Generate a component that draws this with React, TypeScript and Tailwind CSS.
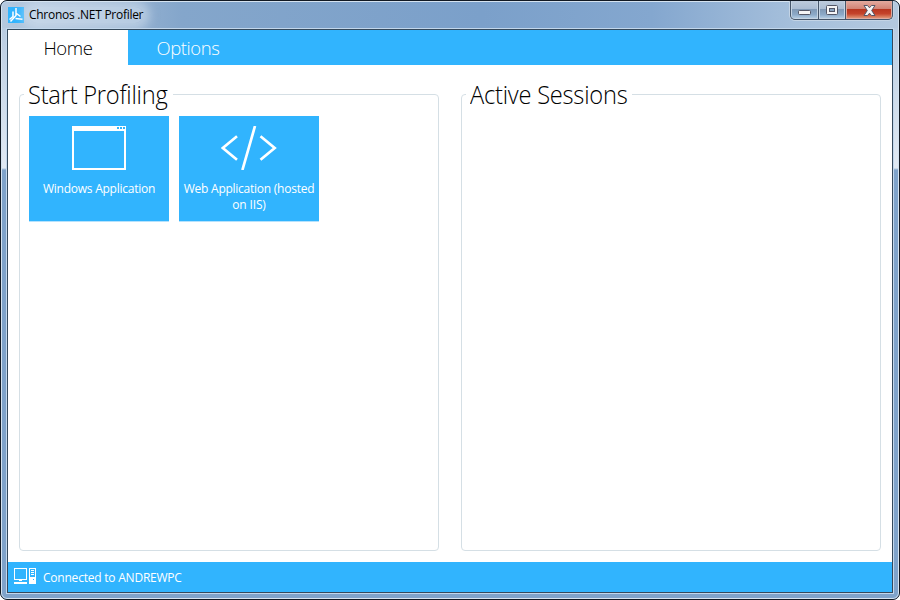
import React from "react";

function LogoIcon() {
  return (
    <svg width="16" height="16" viewBox="0 0 16 16" className="shrink-0">
      <rect width="16" height="16" fill="#31b4fe" />
      <path d="M8 1V8.5L2.5 14.5M8.5 6.5L12.5 9.5M5 4.5V9.5L1.5 12.5M7.5 11.5L14.5 12.3" fill="none" stroke="#fff" strokeWidth="1.5" />
    </svg>
  );
}

function WindowIcon() {
  return (
    <svg width="54" height="44" viewBox="0 0 54 44" shapeRendering="crispEdges">
      <path fillRule="evenodd" fill="#fff" d="M0 0H54V44H0ZM2 5V42H52V5Z" />
      <path fill="#31b4fe" d="M45 1h2v2h-2zM48 1h2v2h-2zM51 1h2v2h-2z" />
    </svg>
  );
}

function CodeIcon() {
  return (
    <svg width="56" height="44" viewBox="0 0 56 44">
      <path fill="none" stroke="#fff" strokeWidth="2.7" d="M16 10.2L1.8 22L16 33.8M39.5 10.2L53.7 22L39.5 33.8M34 0L21.4 44" />
    </svg>
  );
}

function ComputerIcon() {
  return (
    <svg width="22" height="16" viewBox="0 0 22 16" shapeRendering="crispEdges" className="shrink-0">
      <path fillRule="evenodd" fill="#fff" d="M0 0H13V12H0ZM1 1V11H12V1ZM5 12h3v1H5zM0 14h13v2H0zM15 0h7v16h-7zM16 1v8h5V1z" />
      <path fill="#fff" d="M17 2h3v1h-3zM17 4h3v1h-3zM17 6h3v1h-3z" />
      <path fill="#31b4fe" d="M19 11h1v1h-1z" />
    </svg>
  );
}

function WindowButtons() {
  const glass = "bg-[linear-gradient(180deg,#bdcbdc_0%,#abbdd3_45%,#7f98b5_48%,#8daac8_80%,#b0c9e0_100%)]";
  return (
    <div className="flex h-[19px] w-[103px] overflow-hidden rounded-b-[5px] border border-t-0 border-[#46566a] bg-[#46566a] shadow-[0_0_0_1px_#c4d4e5]">
      <div className={`flex w-[27px] items-center justify-center border border-t-0 border-[#c6d4e3] ${glass}`}>
        <svg width="13" height="5" viewBox="0 0 13 5" className="mt-[6px]">
          <rect x="0.5" y="0.5" width="12" height="4" rx="1" fill="#f5f5f6" stroke="#535666" />
        </svg>
      </div>
      <div className={`ml-px flex w-[26px] items-center justify-center border border-t-0 border-[#c6d4e3] ${glass}`}>
        <svg width="12" height="10" viewBox="0 0 12 10" className="mt-px">
          <rect x="0.5" y="0.5" width="11" height="9" rx="1" fill="#f5f5f6" stroke="#535666" />
          <rect x="3.5" y="3.5" width="5" height="3" fill="#8ba5c1" stroke="#535666" />
        </svg>
      </div>
      <div className="ml-px flex flex-1 items-center justify-center border border-t-0 border-[#dfaaa0] bg-[linear-gradient(180deg,#e3aa9f_0%,#d28476_45%,#b8351f_48%,#c5442b_75%,#df9272_100%)]">
        <svg width="13" height="11" viewBox="0 0 13 11" className="mt-px">
          <path d="M1 .5h3.5l2 2.3 2-2.3H12L8.7 5.5 12 10.5H8.5l-2-2.3-2 2.3H1l3.3-5z" fill="#f6f6f7" stroke="#535666" strokeLinejoin="round" />
        </svg>
      </div>
    </div>
  );
}

function Group({ title, width, children }: { title: string; width: string; children?: React.ReactNode }) {
  return (
    <fieldset className="h-[470px] w-[420px] min-w-0 rounded-[4px] border border-[#d5dfe5] pl-[9px]">
      <legend className={`-ml-[5px] h-[27px] whitespace-nowrap pl-[4px] text-[26px] font-light leading-[26px] text-black ${width}`}>
        <span className="inline-block origin-left scale-x-[0.91] tracking-[-0.25px]">{title}</span>
      </legend>
      {children}
    </fieldset>
  );
}

function Tile({ icon, children }: { icon: React.ReactNode; children: React.ReactNode }) {
  return (
    <div className="flex h-[105px] w-[140px] flex-col items-center bg-[#31b4fe] pt-[10px] text-center text-[12px] font-medium leading-4 text-white shadow-[0_1px_0_#b5e2fd]">
      {icon}
      <div className="mt-[11px] whitespace-nowrap">{children}</div>
    </div>
  );
}

export default function App() {
  return (
    <div className="h-[600px] w-[900px] bg-white font-['Open_Sans','Noto_Sans',sans-serif]">
      <div className="h-full w-full overflow-hidden rounded-[7px] border border-[#111923] bg-[#7fa4cc]">
        <div className="flex h-full flex-col rounded-[6px] border border-[#d5e3f0] bg-[linear-gradient(180deg,#b9cce1_0,#b9cce1_27px,#cddbea_90px,#e0e9f3_166px,#7fa3ca_168px,#7fa3ca_100%)] px-[4px] pb-[4px]">
          <header className="-mx-[4px] flex h-[26px] shrink-0 items-start justify-between rounded-t-[5px] bg-[linear-gradient(90deg,#b5c9df_0,#a0b9d5_90px,#84a6cb_180px,#7ba0ca_480px,#84a7cf_650px,#a5bfdb_790px,#b4c9df_100%)] pl-[6px] pr-[5px]">
            <div className="flex h-[26px] items-center gap-[5px]">
              <LogoIcon />
              <span className="whitespace-nowrap rounded-full bg-[#dce8f4]/50 text-[12px] leading-4 tracking-[-0.28px] text-black shadow-[0_0_10px_7px_rgba(220,232,244,0.5)]">
                Chronos .NET Profiler
              </span>
            </div>
            <div className="-mt-px">
              <WindowButtons />
            </div>
          </header>
          <div className="min-h-0 flex-1 border border-[#c2d7ec]">
            <div className="flex h-full flex-col border border-[#34495c] bg-white">
              <nav className="flex h-[35px] shrink-0 bg-[#31b4fe] text-[18.5px] font-light leading-[36px]">
                <div className="w-[120px] bg-white text-center tracking-[-0.4px] text-black">Home</div>
                <div className="w-[120px] text-center tracking-[-0.45px] text-white">Options</div>
              </nav>
              <main className="flex min-h-0 flex-1 justify-between px-[11px] pt-[16px]">
                <Group title="Start Profiling" width="w-[149px]">
                  <div className="mt-[8px] flex gap-[10px]">
                    <Tile icon={<WindowIcon />}>
                      <span className="tracking-[-0.25px]">Windows Application</span>
                    </Tile>
                    <Tile icon={<CodeIcon />}>
                      <span className="tracking-[-0.25px]">Web Application (hosted</span>
                      <br />
                      <span className="tracking-[-0.15px]">on IIS)</span>
                    </Tile>
                  </div>
                </Group>
                <Group title="Active Sessions" width="w-[166px]" />
              </main>
              <footer className="flex h-[30px] shrink-0 items-center bg-[#31b4fe] pl-[6px] text-[12px] font-medium text-white">
                <div className="-mt-[2px]">
                  <ComputerIcon />
                </div>
                <span className="ml-[7px] mt-[2px] tracking-[-0.22px]">Connected to ANDREWPC</span>
              </footer>
            </div>
          </div>
        </div>
      </div>
    </div>
  );
}
